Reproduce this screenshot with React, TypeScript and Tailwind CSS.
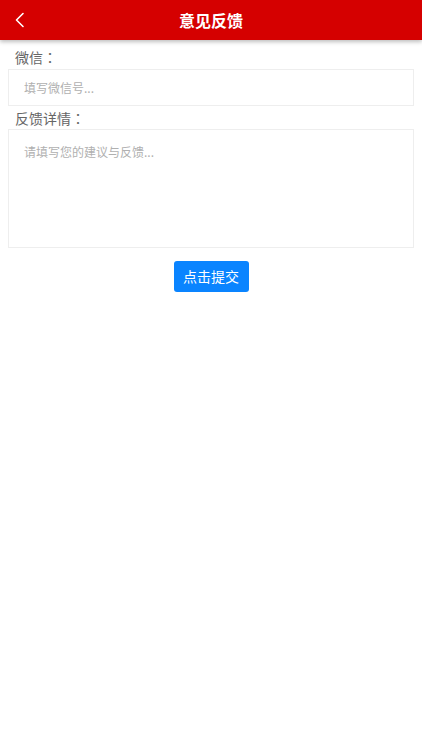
import React from 'react'

const Colon = () => (
    <span style={{ fontFamily: '"Noto Sans CJK TC", sans-serif' }}>：</span>
)

export default function App() {
    return (
        <div className="min-h-[750px] bg-white" style={{ fontFamily: '"Noto Sans CJK SC", "Noto Sans", sans-serif' }}>
            {/* Header */}
            <div className="relative flex h-10 items-center justify-center bg-[#d50000] shadow-[0_2px_4px_rgba(0,0,0,0.25)]">
                <svg className="absolute left-[13px] top-[12px]" width="14" height="16" viewBox="0 0 14 16" fill="none">
                    <path d="M10 1.5 L3.5 8 L10 14.5" stroke="white" strokeWidth="1.6" strokeLinecap="round" strokeLinejoin="round" />
                </svg>
                <h1 className="text-[16px] font-bold leading-none text-white">意见反馈</h1>
            </div>

            <div className="px-2">
                {/* WeChat */}
                <p className="pl-[7px] pt-[5px] text-[14px] leading-[24px] text-[#666]">微信<Colon /></p>
                <input
                    type="text"
                    placeholder="填写微信号..."
                    className="h-[37px] w-full border border-[#eeeeee] px-[15px] text-[12px] text-[#333] outline-none placeholder:text-[#b0b0b0]"
                />

                {/* Feedback details */}
                <p className="pl-[7px] pt-[1px] text-[14px] leading-[22px] text-[#666]">反馈详情<Colon /></p>
                <textarea
                    placeholder="请填写您的建议与反馈..."
                    className="block h-[119px] w-full resize-none border border-[#eeeeee] px-[15px] py-[13px] text-[12px] text-[#333] outline-none placeholder:text-[#b0b0b0]"
                />

                <div className="flex justify-center pt-[13px]">
                    <button
                        type="button"
                        className="h-[31px] w-[75px] rounded-[3px] bg-[#0a84ff] text-[14px] text-white"
                    >
                        点击提交
                    </button>
                </div>
            </div>
        </div>
    )
}
